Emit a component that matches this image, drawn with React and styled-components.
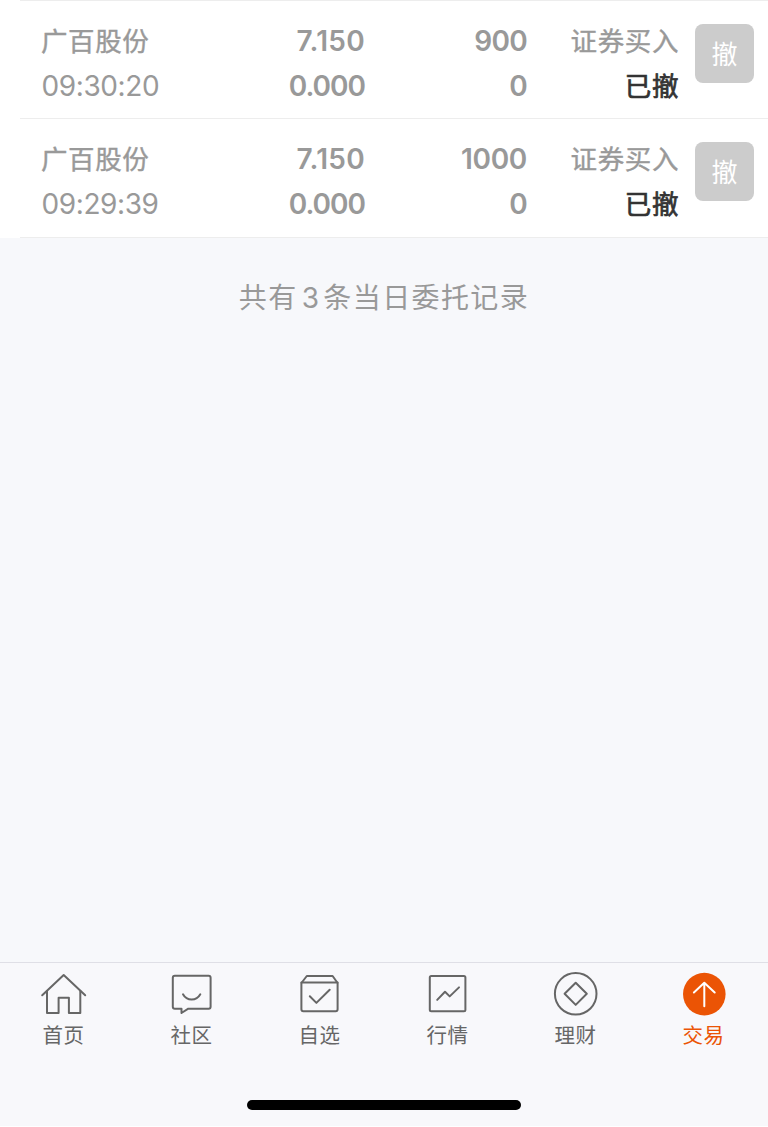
import React, { useState } from "react";
import styled, { createGlobalStyle } from "styled-components";

const GlobalStyle = createGlobalStyle`
  * {
    box-sizing: border-box;
  }

  body {
    margin: 0;
    background: #fff;
    font-family: Inter, "Noto Sans CJK SC", sans-serif;
  }
`;

const Page = styled.div`
  display: flex;
  flex-direction: column;
  width: 768px;
  height: 1126px;
  background: #f7f8fb;
  overflow: hidden;
`;

const OrderList = styled.div`
  background: #fff;
`;

const OrderRow = styled.div`
  display: grid;
  grid-template-columns: 180px 144px 162px 152px 75px;
  height: 118.3px;
  margin-left: 20px;
  padding: 17.5px 14px 0 21px;
  border-top: 1px solid #ededed;

  &:last-child {
    height: 119.3px;
    border-bottom: 1px solid #ededed;
  }
`;

const Cell = styled.div`
  display: flex;
  flex-direction: column;
  align-items: ${(props) => (props.$left ? "flex-start" : "flex-end")};
  color: #999;
  white-space: nowrap;
`;

const ChineseText = styled.span`
  height: 45.4px;
  font-family: "Noto Sans CJK SC", sans-serif;
  font-size: 26.5px;
  line-height: 41px;
  letter-spacing: 0.6px;
  color: ${(props) => (props.$dark ? "#333" : "#999")};
  -webkit-text-stroke: ${(props) => props.$stroke || "0.4px"} currentColor;
`;

const NumberText = styled.span`
  height: 45.4px;
  font-size: 28px;
  font-weight: 600;
  line-height: 45px;
  letter-spacing: ${(props) => props.$spacing || "-0.7px"};
`;

const TimeText = styled(NumberText)`
  padding-left: 0.5px;
  font-weight: 400;
  letter-spacing: -0.4px;
`;

const CancelButton = styled.button`
  justify-self: end;
  width: 59px;
  height: 59px;
  margin-top: 5.5px;
  padding: 0 0 2px;
  border: none;
  border-radius: 8px;
  background: #ccc;
  color: #fff;
  font-family: "Noto Sans CJK SC", sans-serif;
  font-size: 26px;
  line-height: 57px;
`;

const Summary = styled.p`
  flex: 1;
  margin: 0;
  padding-top: 36px;
  color: #999;
  font-family: "Noto Sans CJK SC", sans-serif;
  font-size: 28px;
  line-height: 44px;
  letter-spacing: 1.4px;
  text-align: center;
`;

const Count = styled.span`
  margin: 0 3px 0 4px;
  font-family: Inter, sans-serif;
  font-size: 28px;
`;

const TabBar = styled.nav`
  display: grid;
  grid-template-columns: repeat(6, 1fr);
  height: 164px;
  border-top: 1px solid #dfdfe6;
  background: #f8f8fb;
`;

const Tab = styled.div`
  display: flex;
  flex-direction: column;
  align-items: center;
  padding-top: 7px;
  color: ${(props) => (props.$active ? "#eb5405" : "#666")};
`;

const TabIcon = styled.svg`
  width: 48px;
  height: 48px;
  fill: none;
  stroke: currentColor;
  stroke-width: 2;
  stroke-linecap: round;
  stroke-linejoin: round;
`;

const TabLabel = styled.span`
  padding-right: 1px;
  font-family: "Noto Sans CJK SC", sans-serif;
  font-size: 20.5px;
  line-height: 33px;
  letter-spacing: 0.6px;
`;

const HomeIndicator = styled.div`
  position: absolute;
  top: 1100px;
  left: 247px;
  width: 274px;
  height: 10px;
  border-radius: 5px;
  background: #000;
`;

const orders = [
  { name: "广百股份", time: "09:30:20", price: "7.150", deal: "0.000", amount: "900", done: "0" },
  { name: "广百股份", time: "09:29:39", price: "7.150", deal: "0.000", amount: "1000", done: "0" },
];

const tabs = [
  {
    label: "首页",
    icon: (
      <>
        <path d="M2.2 25.3 23.7 5l21.5 20.3" />
        <path d="M7 21v22.1h11.6V27.7h10.3v15.4h11.4V21" />
      </>
    ),
  },
  {
    label: "社区",
    icon: (
      <>
        <path d="M6.8 5.8h33.8a2 2 0 0 1 2 2v28.9a2 2 0 0 1-2 2H20.3L13.5 43v-4.3H6.8a2 2 0 0 1-2-2V7.8a2 2 0 0 1 2-2z" />
        <path d="M15 24.3c3.8 7 13.5 7 17.3 0" />
      </>
    ),
  },
  {
    label: "自选",
    icon: (
      <>
        <path d="M5.4 13 10.8 6h25.8l5 7v26.3a2 2 0 0 1-2 2H7.4a2 2 0 0 1-2-2z" />
        <path d="M5.4 12.5h36.2M13.8 26.2l6.6 6.7 13.3-13.2" />
      </>
    ),
  },
  {
    label: "行情",
    icon: (
      <>
        <rect x="5.8" y="6" width="35.6" height="35.3" rx="1.5" />
        <path d="m13.2 29.9 7.8-8.1 4.7 4.6 9.3-9" />
      </>
    ),
  },
  {
    label: "理财",
    icon: (
      <>
        <circle cx="23.7" cy="23.8" r="20.8" />
        <path d="m23.7 12.7 11.1 11.1-11.1 11.1-11.1-11.1z" />
      </>
    ),
  },
  {
    label: "交易",
    icon: (
      <>
        <circle cx="24.3" cy="24.1" r="21.3" fill="currentColor" stroke="none" />
        <path d="M24.3 36.3V12.7M13.9 22.5l10.4-9.8 10.4 9.8" stroke="#fff" />
      </>
    ),
  },
];

function App() {
  const [activeTab, setActiveTab] = useState("交易");

  return (
    <>
      <GlobalStyle />
      <Page>
        <OrderList>
          {orders.map((order) => (
            <OrderRow key={order.time}>
              <Cell $left>
                <ChineseText>{order.name}</ChineseText>
                <TimeText>{order.time}</TimeText>
              </Cell>
              <Cell>
                <NumberText $spacing="0.3px">{order.price}</NumberText>
                <NumberText $spacing="-1px">{order.deal}</NumberText>
              </Cell>
              <Cell>
                <NumberText $spacing={order.amount.length > 3 ? "-0.3px" : undefined}>
                  {order.amount}
                </NumberText>
                <NumberText>{order.done}</NumberText>
              </Cell>
              <Cell>
                <ChineseText>证券买入</ChineseText>
                <ChineseText $dark $stroke="0.7px">
                  已撤
                </ChineseText>
              </Cell>
              <CancelButton>撤</CancelButton>
            </OrderRow>
          ))}
        </OrderList>
        <Summary>
          共有<Count>3</Count>条当日委托记录
        </Summary>
        <TabBar>
          {tabs.map((tab) => (
            <Tab
              key={tab.label}
              $active={tab.label === activeTab}
              onClick={() => setActiveTab(tab.label)}
            >
              <TabIcon viewBox="0 0 48 48">{tab.icon}</TabIcon>
              <TabLabel>{tab.label}</TabLabel>
            </Tab>
          ))}
        </TabBar>
        <HomeIndicator />
      </Page>
    </>
  );
}

export default App;
